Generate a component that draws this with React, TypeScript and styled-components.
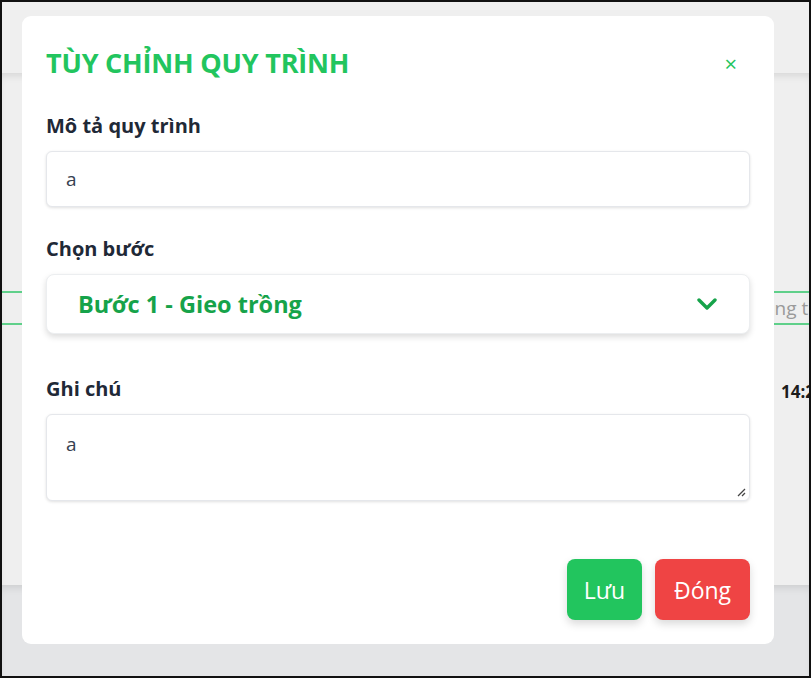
import React from "react";
import styled, { createGlobalStyle } from "styled-components";

const Global = createGlobalStyle`
  html, body { margin: 0; padding: 0; background: #ffffff; }
  body { font-family: "Open Sans", "Noto Sans", sans-serif; }
  * { box-sizing: border-box; }
`;

const Frame = styled.div`
  position: relative;
  width: 811px;
  height: 678px;
  border: 2px solid #111;
  overflow: hidden;
  display: flex;
  flex-direction: column;
  background: #e4e5e7;
`;

const Header = styled.div`
  height: 71px;
  background: #efefef;
  flex-shrink: 0;
`;

const Main = styled.div`
  height: 512px;
  background: #efefef;
  box-shadow: inset 0 6px 8px -4px rgba(0, 0, 0, 0.12);
  display: flex;
  flex-direction: column;
  padding-top: 218px;
  flex-shrink: 0;
`;

const Bottom = styled.div`
  flex: 1;
  background: #e4e5e7;
  box-shadow: inset 0 6px 8px -4px rgba(0, 0, 0, 0.12);
`;

const TabStrip = styled.div`
  height: 34px;
  border-top: 2px solid #5fd08a;
  border-bottom: 2px solid #5fd08a;
  display: flex;
  align-items: center;
  padding-left: 739px;
  white-space: nowrap;
  font-size: 19px;
  color: #9a9a9a;
`;

const TimeRow = styled.div`
  margin-top: 55px;
  padding-left: 779px;
  white-space: nowrap;
  font-size: 17px;
  font-weight: 700;
  color: #1c1c1c;
`;

const Modal = styled.div`
  position: absolute;
  left: 20px;
  top: 14px;
  width: 752px;
  height: 628px;
  background: #ffffff;
  border-radius: 9px;
  padding: 24px;
  display: flex;
  flex-direction: column;
`;

const TitleRow = styled.div`
  display: flex;
  align-items: center;
  justify-content: space-between;
  height: 46px;
`;

const Title = styled.h2`
  margin: 0;
  font-size: 27px;
  font-weight: 700;
  color: #22c55e;
  letter-spacing: -0.2px;
  margin-top: -2px;
`;

const Close = styled.button`
  border: none;
  background: none;
  color: #22c55e;
  font-size: 22px;
  line-height: 1;
  padding: 0;
  margin-right: 13px;
  font-family: "Open Sans", sans-serif;
  cursor: pointer;
`;

const Label = styled.label<{ $top: number }>`
  display: block;
  margin-top: ${(p) => p.$top}px;
  font-size: 20px;
  line-height: 27px;
  font-weight: 700;
  color: #1f2937;
`;

const Field = styled.div<{ $h: number }>`
  margin-top: 12px;
  height: ${(p) => p.$h}px;
  border: 1px solid #e5e7eb;
  border-radius: 6px;
  box-shadow: 0 1px 3px rgba(0, 0, 0, 0.12);
  background: #fff;
  display: flex;
  align-items: center;
  padding: 0 19px;
  font-size: 19px;
  color: #374151;
`;

const Select = styled.div`
  margin-top: 12px;
  height: 60px;
  border: 1px solid #eceef0;
  border-radius: 8px;
  box-shadow: 0 3px 6px rgba(0, 0, 0, 0.14);
  background: #fff;
  display: flex;
  align-items: center;
  justify-content: space-between;
  padding: 0 32px 0 31px;
  font-size: 23.5px;
  font-weight: 700;
  color: #16a34a;
`;

const TextArea = styled.div`
  position: relative;
  margin-top: 12px;
  height: 87px;
  border: 1px solid #e5e7eb;
  border-radius: 6px;
  box-shadow: 0 1px 3px rgba(0, 0, 0, 0.12);
  background: #fff;
  padding: 16px 19px;
  font-size: 19px;
  color: #374151;
`;

const Grip = styled.svg`
  position: absolute;
  right: 3px;
  bottom: 3px;
`;

const Actions = styled.div`
  margin-top: auto;
  display: flex;
  justify-content: flex-end;
  gap: 13px;
`;

const Btn = styled.button<{ $bg: string; $w: number }>`
  width: ${(p) => p.$w}px;
  height: 61px;
  border: none;
  border-radius: 8px;
  background: ${(p) => p.$bg};
  color: #fff;
  font-size: 23px;
  font-family: "Open Sans", sans-serif;
  box-shadow: 0 4px 8px rgba(0, 0, 0, 0.15);
  cursor: pointer;
`;

export default function App() {
  return (
    <>
      <Global />
      <Frame>
        <Header />
        <Main>
          <TabStrip>Thông tin</TabStrip>
          <TimeRow>14:20</TimeRow>
        </Main>
        <Bottom />
        <Modal>
          <TitleRow>
            <Title>TÙY CHỈNH QUY TRÌNH</Title>
            <Close aria-label="close">×</Close>
          </TitleRow>
          <Label $top={26}>Mô tả quy trình</Label>
          <Field $h={56}>a</Field>
          <Label $top={28}>Chọn bước</Label>
          <Select>
            <span>Bước 1 - Gieo trồng</span>
            <svg width="20" height="14" viewBox="0 0 20 14">
              <path d="M2 3 L10 11 L18 3" fill="none" stroke="#16a34a" strokeWidth="3.4" strokeLinecap="round" strokeLinejoin="round" />
            </svg>
          </Select>
          <Label $top={41}>Ghi chú</Label>
          <TextArea>
            a
            <Grip width="10" height="10" viewBox="0 0 10 10">
              <path d="M9 2 L2 9 M9 6 L6 9" stroke="#444" strokeWidth="1.3" />
            </Grip>
          </TextArea>
          <Actions>
            <Btn $bg="#22c55e" $w={75}>Lưu</Btn>
            <Btn $bg="#ef4444" $w={95}>Đóng</Btn>
          </Actions>
        </Modal>
      </Frame>
    </>
  );
}
